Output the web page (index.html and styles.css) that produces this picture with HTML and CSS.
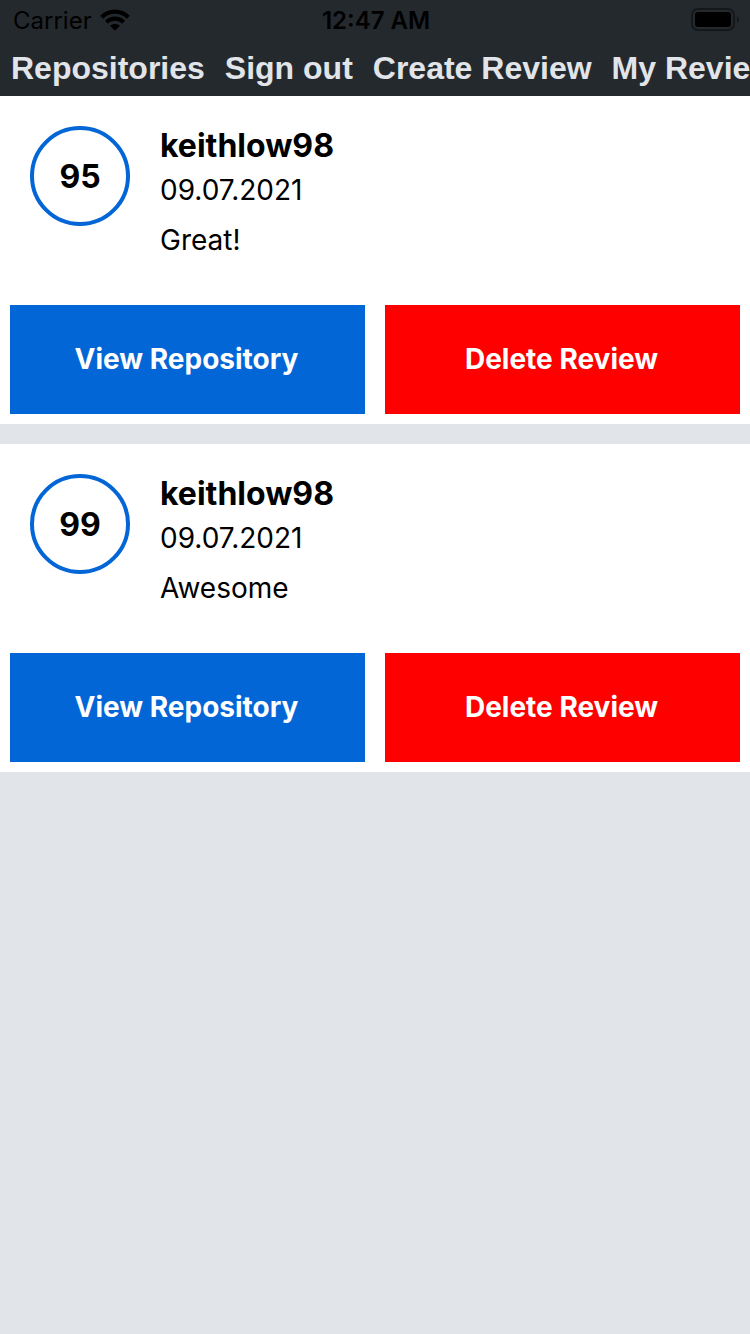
FILE: index.html
```html
<!DOCTYPE html>
<html lang="en">
<head>
<meta charset="utf-8">
<meta name="viewport" content="width=device-width, initial-scale=1">
<title>My Reviews</title>
<link rel="stylesheet" href="styles.css">
</head>
<body>
<header class="app-bar">
  <div class="status">
    <div class="carrier">
      <span>Carrier</span>
      <svg class="wifi" viewBox="0 0 30 22" aria-hidden="true">
        <path d="M0.200 6.800C8.300 -1.700 21.700 -1.700 29.800 6.800L26.800 9.800C20.300 3.100 9.700 3.100 3.200 9.800z"/>
        <path d="M5 11.700C10.600 6.200 19.400 6.200 25 11.700L22 14.700C18.100 10.900 11.900 10.900 8 14.700z"/>
        <path d="M10 16.800C12.900 14.300 17.100 14.300 20 16.800L15 21.800z"/>
      </svg>
    </div>
    <span class="time">12:47 AM</span>
    <svg class="battery" viewBox="0 0 48 24" aria-hidden="true">
      <rect class="battery-shell" x="1" y="1" width="42" height="21" rx="6"/>
      <rect x="4" y="4" width="36" height="15" rx="3"/>
      <path class="battery-tip" d="M46 8q2 1 2 3.500t-2 3.500z"/>
    </svg>
  </div>
  <nav class="tabs">
    <a href="#repositories">Repositories</a>
    <a href="#sign-out">Sign out</a>
    <a href="#create">Create Review</a>
    <a href="#mine">My Reviews</a>
  </nav>
</header>
<main class="reviews">
  <article class="review">
    <div class="summary">
      <div class="rating">95</div>
      <div class="details">
        <h2 class="name">keithlow98</h2>
        <time class="date" datetime="2021-07-09">09.07.2021</time>
        <p class="comment">Great!</p>
      </div>
    </div>
    <div class="actions">
      <button class="button" type="button">View Repository</button>
      <button class="button danger" type="button">Delete Review</button>
    </div>
  </article>
  <article class="review">
    <div class="summary">
      <div class="rating">99</div>
      <div class="details">
        <h2 class="name">keithlow98</h2>
        <time class="date" datetime="2021-07-09">09.07.2021</time>
        <p class="comment">Awesome</p>
      </div>
    </div>
    <div class="actions">
      <button class="button" type="button">View Repository</button>
      <button class="button danger" type="button">Delete Review</button>
    </div>
  </article>
</main>
</body>
</html>
```
FILE: styles.css
```css
* {
  box-sizing: border-box;
}

body {
  margin: 0;
  min-height: 100vh;
  background: #e1e4e8;
  color: #000;
  font-family: Inter, "Liberation Sans", sans-serif;
  font-size: 28px;
}

.app-bar {
  background: #24292e;
}

.status {
  display: grid;
  grid-template-columns: 1fr auto 1fr;
  align-items: center;
  height: 40px;
  padding: 0 11px 0 13px;
  font-size: 24px;
}

.carrier {
  display: flex;
  align-items: center;
  gap: 8px;
}

.wifi {
  width: 30px;
  height: 22px;
}

.time {
  font-weight: 600;
}

.battery {
  justify-self: end;
  width: 48px;
  height: 24px;
}

.battery-shell {
  fill: none;
  stroke: #15181b;
  stroke-width: 2;
}

.battery-tip {
  fill: #15181b;
}

.tabs {
  display: flex;
  gap: 20px;
  padding: 10px 11px;
  overflow: hidden;
  font-family: "Liberation Sans", Arial, sans-serif;
  font-size: 32px;
  font-weight: 700;
  line-height: 36px;
  white-space: nowrap;
}

.tabs a {
  color: #e1e4e8;
  text-decoration: none;
}

.reviews {
  display: flex;
  flex-direction: column;
  gap: 20px;
}

.review {
  background: #fff;
}

.summary {
  display: flex;
  gap: 30px;
  padding: 30px 30px 39px;
}

.rating {
  display: flex;
  flex: none;
  align-items: center;
  justify-content: center;
  width: 100px;
  height: 100px;
  border: 4px solid #0366d6;
  border-radius: 50%;
  font-size: 32px;
  font-weight: 700;
}

.name {
  margin: 0;
  font-size: 32px;
  font-weight: 700;
  line-height: 40px;
}

.date {
  display: block;
  line-height: 48px;
}

.comment {
  margin: 0;
  line-height: 52px;
}

.actions {
  display: grid;
  grid-template-columns: 1fr 1fr;
  gap: 20px;
  padding: 0 10px 10px;
}

.button {
  height: 109px;
  padding: 0 2px 2px 0;
  border: 0;
  background: #0366d6;
  color: #fff;
  font: inherit;
  font-weight: 700;
}

.danger {
  background: #f00;
}
```
